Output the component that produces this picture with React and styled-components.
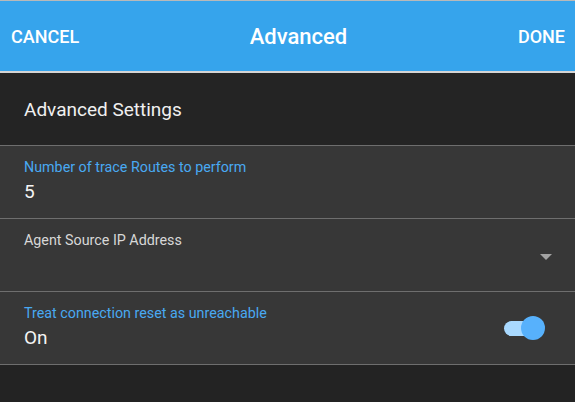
import React from "react";
import styled, { createGlobalStyle } from "styled-components";

const Global = createGlobalStyle`
  html, body { margin: 0; padding: 0; background: #232323; }
  body { font-family: Roboto, "Liberation Sans", Arial, sans-serif; -webkit-font-smoothing: antialiased; }
  #root { min-height: 402px; background: #232323; }
`;

const Page = styled.div`
  width: 575px;
  height: 402px;
  display: flex;
  flex-direction: column;
  background: #232323;
  overflow: hidden;
`;

const Header = styled.header`
  height: 70px;
  flex: none;
  display: flex;
  align-items: center;
  padding: 0 10px 0 11px;
  background: #36a4ec;
  border-top: 1px solid #b9b9b9;
  border-bottom: 2px solid #d4d4d4;
`;

const HeaderButton = styled.button`
  background: none;
  border: none;
  padding: 0;
  margin: 0;
  color: #ffffff;
  font-family: inherit;
  font-size: 18px;
  font-weight: 500;
  text-transform: uppercase;
  cursor: pointer;
`;

const Title = styled.h1`
  flex: 1;
  margin: 0;
  text-align: center;
  color: #ffffff;
  font-size: 22px;
  font-weight: 500;
`;

const SectionHeading = styled.div`
  height: 72px;
  flex: none;
  display: flex;
  align-items: center;
  padding-left: 24px;
  color: #f0f0f0;
  font-size: 19px;
  font-weight: 400;
  background: #242424;
  border-bottom: 1px solid #6e6e6e;
`;

const Row = styled.div`
  height: 72px;
  flex: none;
  display: flex;
  align-items: center;
  padding: 0 ${(p) => p.$right}px 0 24px;
  background: #373737;
  border-bottom: 1px solid #6e6e6e;
`;

const Field = styled.div`
  flex: 1;
  align-self: flex-start;
  padding-top: 13px;
  display: flex;
  flex-direction: column;
`;

const Label = styled.div`
  font-size: 14.3px;
  line-height: 17px;
  color: ${(p) => (p.$active ? "#49a9f2" : "#d8d8d8")};
`;

const Value = styled.div`
  margin-top: 4px;
  font-size: 19px;
  line-height: 24px;
  color: #f4f4f4;
  min-height: 24px;
`;

const Arrow = styled.div`
  margin-top: 4px;
  width: 0;
  height: 0;
  border-left: 6px solid transparent;
  border-right: 6px solid transparent;
  border-top: 6px solid #a3a3a3;
`;

const Toggle = styled.div`
  position: relative;
  width: 41px;
  height: 24px;
  display: flex;
  align-items: center;
`;

const Track = styled.div`
  width: 36px;
  height: 15px;
  border-radius: 8px;
  background: ${(p) => (p.$on ? "#a9d9ff" : "#888")};
`;

const Thumb = styled.div`
  position: absolute;
  top: 0;
  left: ${(p) => (p.$on ? "17px" : "0")};
  width: 24px;
  height: 24px;
  border-radius: 50%;
  background: ${(p) => (p.$on ? "#57b1fc" : "#eee")};
`;

const Rest = styled.div`
  flex: 1;
  background: #232323;
`;

export default function App() {
  return (
    <Page>
      <Global />
      <Header>
        <HeaderButton>Cancel</HeaderButton>
        <Title>Advanced</Title>
        <HeaderButton>Done</HeaderButton>
      </Header>
      <SectionHeading>Advanced Settings</SectionHeading>
      <Row $right={23}>
        <Field>
          <Label $active>Number of trace Routes to perform</Label>
          <Value>5</Value>
        </Field>
      </Row>
      <Row $right={23}>
        <Field>
          <Label>Agent Source IP Address</Label>
          <Value></Value>
        </Field>
        <Arrow />
      </Row>
      <Row $right={30}>
        <Field>
          <Label $active>Treat connection reset as unreachable</Label>
          <Value>On</Value>
        </Field>
        <Toggle>
          <Track $on />
          <Thumb $on />
        </Toggle>
      </Row>
      <Rest />
    </Page>
  );
}
